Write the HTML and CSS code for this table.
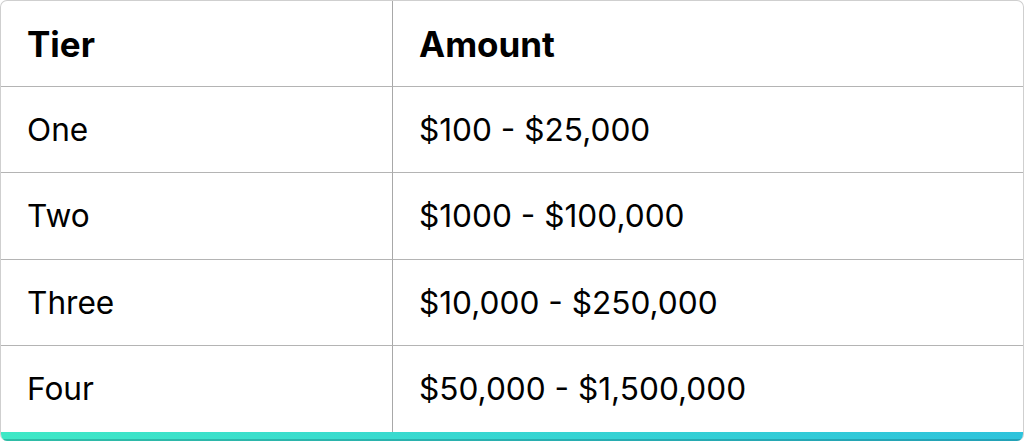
FILE: index.html
```html
<!DOCTYPE html>
<html>
<head>
<meta charset="utf-8">
<link rel="stylesheet" href="styles.css">
</head>
<body>
<div class="card">
  <div class="table">
    <div class="cell head first">Tier</div>
    <div class="cell head">Amount</div>
    <div class="cell first">One</div>
    <div class="cell">$100 - $25,000</div>
    <div class="cell first">Two</div>
    <div class="cell">$1000 - $100,000</div>
    <div class="cell first">Three</div>
    <div class="cell">$10,000 - $250,000</div>
    <div class="cell first last">Four</div>
    <div class="cell last">$50,000 - $1,500,000</div>
  </div>
  <div class="bar"></div>
</div>
</body>
</html>
```
FILE: styles.css
```css
html, body {
  margin: 0;
  padding: 0;
  background: #fff;
}
.card {
  width: 1024px;
  height: 441px;
  box-sizing: border-box;
  border: 1px solid #cfcfcf;
  border-bottom: none;
  border-radius: 7px;
  overflow: hidden;
  display: flex;
  flex-direction: column;
  font-family: Inter, "Liberation Sans", sans-serif;
  color: #000;
}
.table {
  flex: 1;
  display: grid;
  grid-template-columns: 392px 1fr;
  grid-template-rows: repeat(5, 1fr);
}
.cell {
  display: flex;
  align-items: center;
  padding-left: 26px;
  font-size: 31.6px;
  border-bottom: 1px solid #b4b4b4;
}
.cell.first {
  border-right: 1px solid #a8a8a8;
}
.cell.last {
  border-bottom: none;
}
.head {
  font-weight: 700;
  font-size: 35px;
}
.bar {
  height: 9px;
  background: linear-gradient(90deg, #3fe8c6 0%, #37d6d2 50%, #2ec3dc 100%);
  box-shadow: inset 0 -2px 0 rgba(0, 60, 70, 0.25);
}
```
